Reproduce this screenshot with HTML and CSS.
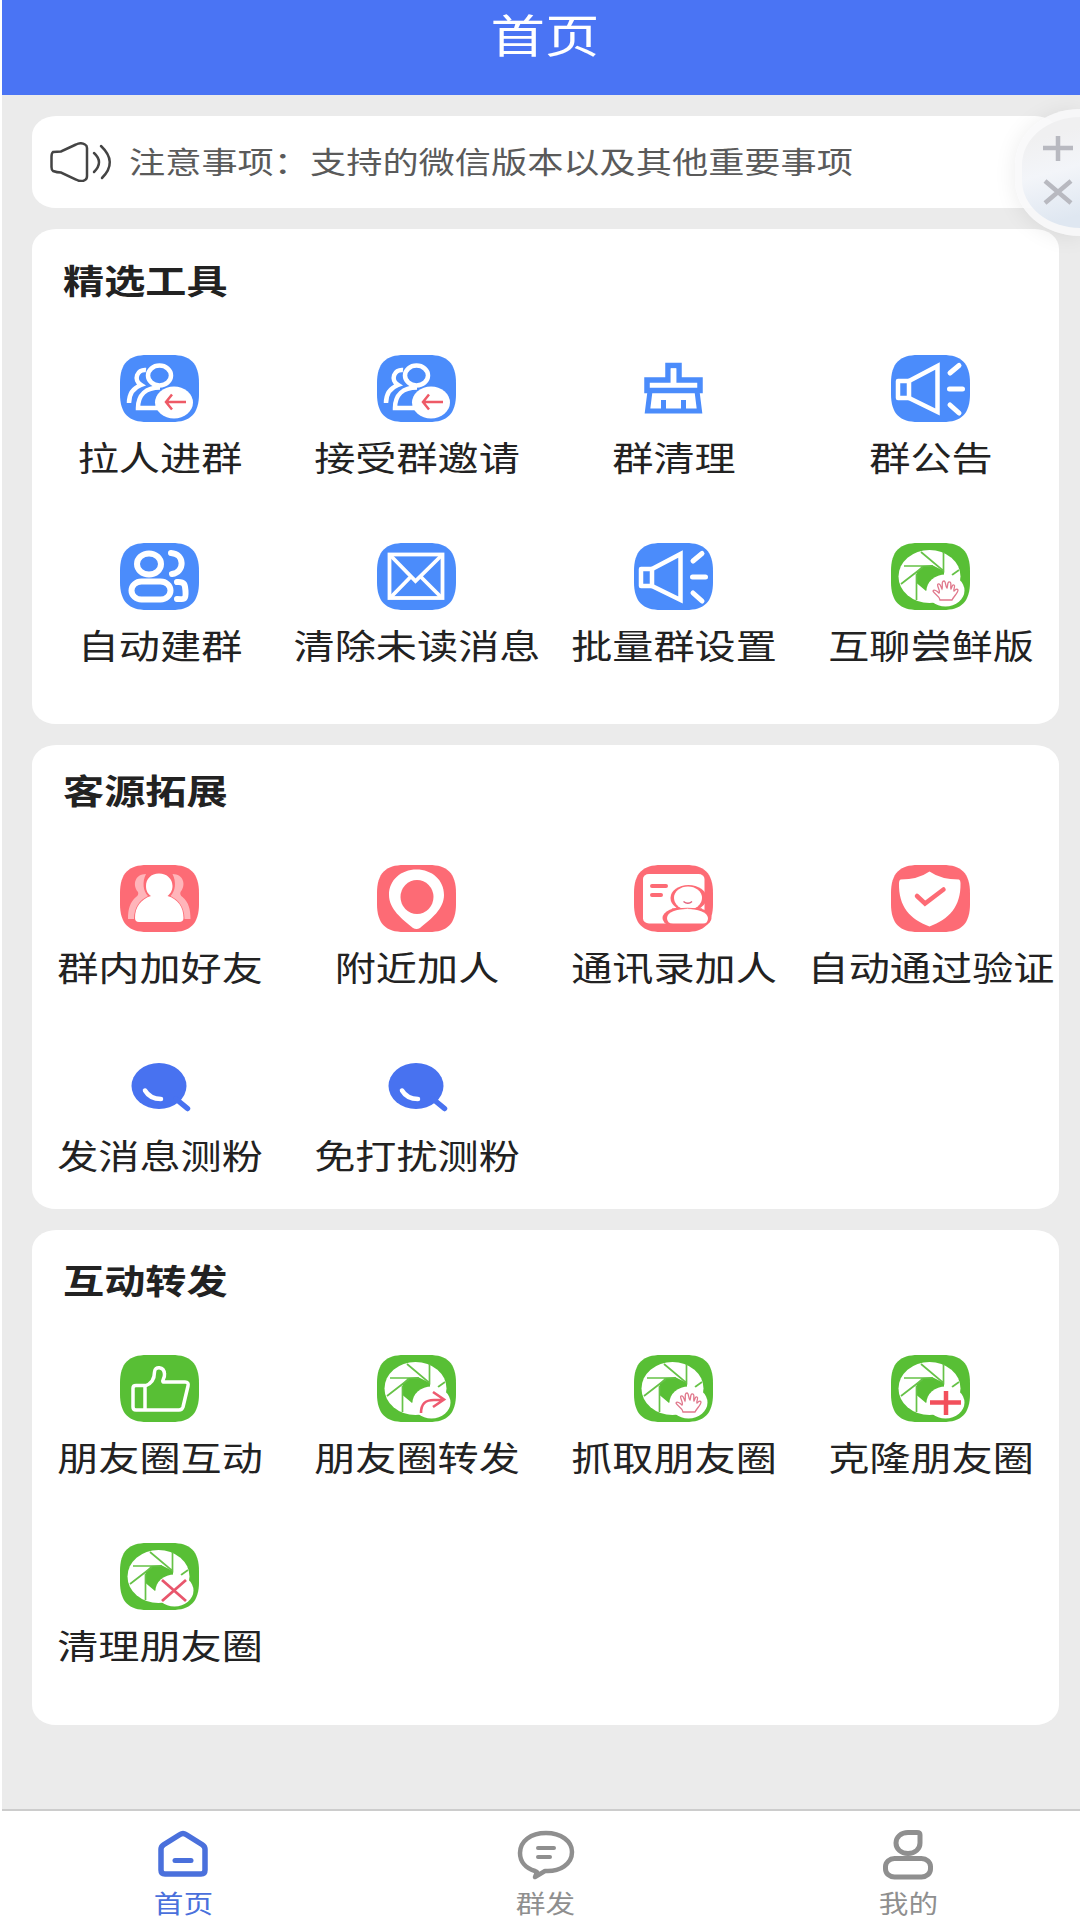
FILE: index.html
```html
<!DOCTYPE html>
<html lang="zh-CN">
<head>
  <meta charset="UTF-8">
  <meta name="viewport" content="width=device-width, initial-scale=1.0">
  <title>首页</title>
  <link rel="stylesheet" href="styles.css">
</head>
<body>
  <svg class="sprite">
    <symbol id="tile" viewBox="0 0 79 67">
      <path d="M0 28C0 8 9 0 27 0H52C70 0 79 8 79 28V39C79 59 70 67 52 67H27C9 67 0 59 0 39Z"/>
    </symbol>

    <!-- 蓝色 -->
    <symbol id="invite" viewBox="0 0 79 67">
      <use href="#tile" fill="#4b8cfb"/>
      <g fill="none" stroke="#fff" stroke-width="4.500">
        <ellipse cx="39.5" cy="20.5" rx="11.5" ry="10"/>
        <path d="M46 53H18C18 40 26 32.5 40 32.5"/>
        <path d="M26 15C17 14 13 25 21 30C13 33 9 39 9 48"/>
      </g>
      <ellipse cx="54" cy="47.5" rx="19" ry="16" fill="#fff"/>
      <path d="M66 47H46M52 39.5L46 47L52 54.5" fill="none" stroke="#ee5a66" stroke-width="2.5"/>
    </symbol>
    <symbol id="broom" viewBox="0 0 79 67">
      <g fill="none" stroke="#4b8cfb" stroke-width="5.500">
        <path d="M34 25V10.500H45V25H66V35.500H13V25Z"/>
        <path d="M16 36L13.500 56H65.500L63 36M29.500 45V56M49.500 45V56" stroke-width="5"/>
        <path d="M39.500 13.500V30" stroke="#fff" stroke-width="5.500"/>
      </g>
    </symbol>
    <symbol id="horn" viewBox="0 0 79 67">
      <use href="#tile" fill="#4b8cfb"/>
      <g fill="none" stroke="#fff" stroke-width="4.500">
        <path d="M18 26H7V43H18Z" stroke-linejoin="round"/>
        <path d="M18 26L46.500 11V57L18 43"/>
        <path d="M59 18L68 10.500M58.500 34H71.500M59 50L68 58" stroke-width="5" stroke-linecap="round"/>
      </g>
    </symbol>
    <symbol id="group" viewBox="0 0 79 67">
      <use href="#tile" fill="#4b8cfb"/>
      <g fill="none" stroke="#fff" stroke-width="6" stroke-linecap="round">
        <ellipse cx="29" cy="21" rx="12" ry="10.500"/>
        <rect x="11.500" y="38.500" width="39" height="18" rx="10" ry="9"/>
        <path d="M51 10C65 11 65 29 52 31"/>
        <path d="M57 39C65 38.500 65 42 65.500 48C66 56 65 56.500 57 56"/>
      </g>
    </symbol>
    <symbol id="mail" viewBox="0 0 79 67">
      <use href="#tile" fill="#4b8cfb"/>
      <g fill="none" stroke="#fff" stroke-width="3.800">
        <rect x="12.500" y="11.500" width="53" height="43.500"/>
        <path d="M13 12L38.500 38L65 12M13 55L33.500 34M65 55L44 34"/>
      </g>
    </symbol>

    <!-- 红色 -->
    <symbol id="friends" viewBox="0 0 79 67">
      <use href="#tile" fill="#fd6b75"/>
      <path id="shade" d="M26 9C15 9 12 20 18 27Q19 30 16 32C10 37 8 44 8 54H14C14 42 20 35 28 31C23 26 22 17 26 9Z" fill="#ffb5ba"/>
      <use href="#shade" transform="translate(78.500 0) scale(-1 1)"/>
      <path d="M39 8.500C47 8.500 52.500 14 52.500 21C52.500 26 50 29 47.500 31C58 34 63.500 42 63.500 53Q63.500 57 59 57H19Q15 57 15 53C15 42 21 34 31 31C28 29 26 26 26 21C26 14 31 8.500 39 8.500Z" fill="#fff"/>
    </symbol>
    <symbol id="pin" viewBox="0 0 79 67">
      <use href="#tile" fill="#fd6b75"/>
      <path d="M39.500 4.500C55 4.500 67 15 67 30C67 44 54 54 43 63Q39.500 65 36 63C25 54 12 44 12 30C12 15 24 4.500 39.500 4.500Z" fill="#fff"/>
      <ellipse cx="40" cy="32" rx="16.500" ry="17" fill="#fd6b75"/>
    </symbol>
    <symbol id="contact" viewBox="0 0 79 67">
      <use href="#tile" fill="#fd6b75"/>
      <rect x="9" y="9" width="61.500" height="49.500" rx="6" ry="5" fill="#fff"/>
      <path d="M18 21H32M18 30H27" stroke="#fd6b75" stroke-width="4" stroke-linecap="round"/>
      <ellipse cx="54.500" cy="33" rx="18" ry="13" fill="#fd6b75"/>
      <ellipse cx="53" cy="53" rx="24.500" ry="11.500" fill="#fd6b75"/>
      <ellipse cx="54" cy="33" rx="14" ry="11.500" fill="#fff"/>
      <path d="M33 53C33 41 73 41 74 53Q74 58.500 69 58.500H39Q33 58.500 33 53Z" fill="#fff"/>
      <path d="M49.500 36.500Q54 40 58 36.500" fill="none" stroke="#e0607c" stroke-width="1.500"/>
      <path d="M38 44Q54 42.500 68 44" fill="none" stroke="#fd6b75" stroke-width="1"/>
    </symbol>
    <symbol id="shield" viewBox="0 0 79 67">
      <use href="#tile" fill="#fd6b75"/>
      <path d="M38.500 6.500Q50 14.500 68 14.500Q69.500 15 69.500 18C70 42 58 54 38.500 61.500C19 54 7.500 42 8 18Q8 15 9.500 14.500Q27 14.500 38.500 6.500Z" fill="#fff"/>
      <path d="M26 31L34 38.500L52.500 24.500" fill="none" stroke="#fd6b75" stroke-width="4.500" stroke-linecap="round"/>
    </symbol>
    <symbol id="search" viewBox="0 0 79 67">
      <ellipse cx="39" cy="33" rx="27.500" ry="23" fill="#4872f0"/>
      <path d="M56 46L67.500 55.500" stroke="#4872f0" stroke-width="5.500" stroke-linecap="round"/>
      <path d="M25 37.500Q30 46 41 46" fill="none" stroke="#fff" stroke-width="4.500" stroke-linecap="round"/>
    </symbol>

    <!-- 绿色 -->
    <symbol id="thumb" viewBox="0 0 79 67">
      <use href="#tile" fill="#58bf35"/>
      <path d="M25 31C31 29 34.500 25 34.500 17C34.500 11 44 11 44.500 19C45 24 41.500 25 43 27H65Q69 27 68 31L63 52Q62 55 59 55H16Q13 55 13 52V33Q13 30.500 16 30.500H25V55" fill="none" stroke="#fff" stroke-width="3.500" stroke-linejoin="round"/>
    </symbol>
    <symbol id="lens" viewBox="0 0 79 67">
      <use href="#tile" fill="#58bf35"/>
      <ellipse cx="38.500" cy="33.500" rx="31" ry="26.500" fill="#fff"/>
      <path d="M31 23L41 22L53 28V34L35 48L25.500 40V29Z" fill="#58bf35"/>
      <path d="M30 9L52.500 28V9M13 23H42M10 41L32 24M25.500 31V57M61 32L68 27" fill="none" stroke="#66c247" stroke-width="1.700"/>
      <ellipse cx="54.500" cy="47.500" rx="19" ry="16" fill="#fff"/>
    </symbol>
    <symbol id="catch" viewBox="0 0 79 67">
      <use href="#lens"/>
      <path d="M49 57C48 52 43 51 42 48C43 46 46 48 48 50C50 48 45 42 47 41C49 40 50 44 51 46C52 44 50 38 53 38C55 38 54 43 56 45C57 43 56 38 59 39C61 40 59 44 60 46C61 45 61 41 63 42C65 43 62 46 63 48C64 47 66 45 67 47C67 50 63 53 61 57Z" fill="none" stroke="#e0788c" stroke-width="1.300"/>
    </symbol>
    <symbol id="share" viewBox="0 0 79 67">
      <use href="#lens"/>
      <path d="M44 58C44 48 49 45 57 45H66M56 37L67 44.500L56 52" fill="none" stroke="#ee5a70" stroke-width="2.600"/>
    </symbol>
    <symbol id="clone" viewBox="0 0 79 67">
      <use href="#lens"/>
      <path d="M39 47.500H70M55 36V60" stroke="#f2505c" stroke-width="4.500"/>
    </symbol>
    <symbol id="clear" viewBox="0 0 79 67">
      <use href="#lens"/>
      <path d="M42 37L66 58M66 37L42 58" stroke="#e8566c" stroke-width="2.800"/>
    </symbol>
  </svg>

  <div class="app">
    <header class="header"><span class="wide">首页</span></header>

    <main class="content">
      <div class="card notice">
        <svg class="speaker" viewBox="0 0 62 40" fill="none" stroke="#444" stroke-width="2.500" stroke-linecap="round">
          <path d="M3 10Q7 9.500 11 9.500L26 2.500Q31 0 35 2.500Q37 3.500 37 6V34Q37 37 35 38Q31 40.500 26 37.500L11 30.500Q7 30.500 3 29Q1.500 28 1.500 25V15Q1.500 11 3 10Z"/>
          <path d="M44 11Q54 20 44 30M51 4Q68 20 52 36"/>
        </svg>
        <span class="wide notice-text">注意事项：支持的微信版本以及其他重要事项</span>
      </div>

      <section class="card tools">
        <h2><span class="wide">精选工具</span></h2>
        <div class="grid">
          <div class="item"><svg><use href="#invite"/></svg><span class="wide">拉人进群</span></div>
          <div class="item"><svg><use href="#invite"/></svg><span class="wide">接受群邀请</span></div>
          <div class="item"><svg><use href="#broom"/></svg><span class="wide">群清理</span></div>
          <div class="item"><svg><use href="#horn"/></svg><span class="wide">群公告</span></div>
          <div class="item"><svg><use href="#group"/></svg><span class="wide">自动建群</span></div>
          <div class="item"><svg><use href="#mail"/></svg><span class="wide">清除未读消息</span></div>
          <div class="item"><svg><use href="#horn"/></svg><span class="wide">批量群设置</span></div>
          <div class="item"><svg><use href="#catch"/></svg><span class="wide">互聊尝鲜版</span></div>
        </div>
      </section>

      <section class="card expand">
        <h2><span class="wide">客源拓展</span></h2>
        <div class="grid">
          <div class="item"><svg><use href="#friends"/></svg><span class="wide">群内加好友</span></div>
          <div class="item"><svg><use href="#pin"/></svg><span class="wide">附近加人</span></div>
          <div class="item"><svg><use href="#contact"/></svg><span class="wide">通讯录加人</span></div>
          <div class="item"><svg><use href="#shield"/></svg><span class="wide">自动通过验证</span></div>
          <div class="item"><svg><use href="#search"/></svg><span class="wide">发消息测粉</span></div>
          <div class="item"><svg><use href="#search"/></svg><span class="wide">免打扰测粉</span></div>
        </div>
      </section>

      <section class="card forward">
        <h2><span class="wide">互动转发</span></h2>
        <div class="grid">
          <div class="item"><svg><use href="#thumb"/></svg><span class="wide">朋友圈互动</span></div>
          <div class="item"><svg><use href="#share"/></svg><span class="wide">朋友圈转发</span></div>
          <div class="item"><svg><use href="#catch"/></svg><span class="wide">抓取朋友圈</span></div>
          <div class="item"><svg><use href="#clone"/></svg><span class="wide">克隆朋友圈</span></div>
          <div class="item"><svg><use href="#clear"/></svg><span class="wide">清理朋友圈</span></div>
        </div>
      </section>
    </main>

    <nav class="tabbar">
      <div class="tab active">
        <svg viewBox="0 0 60 52" fill="none" stroke="currentColor" stroke-width="5.500" stroke-linejoin="round" stroke-linecap="round">
          <path d="M27 5.500Q30 3.500 33 5.500L49 15.500Q52 17.500 52 20V41Q52 45 48 45H12Q8 45 8 41V20Q8 17.500 11 15.500Z"/>
          <path d="M22 31.500H38" stroke-width="5"/>
        </svg>
        <span class="wide">首页</span>
      </div>
      <div class="tab">
        <svg viewBox="0 0 60 52" fill="none" stroke="currentColor" stroke-width="4.500" stroke-linejoin="round">
          <path d="M19 42C9 39 4 32 4 24C4 12 15 4 30 4C45 4 56 12 56 23C56 35 44 43 29 42L19 48L21 43Z"/>
          <path d="M22 19H38M22 28H34" stroke-width="4" stroke-linecap="round"/>
        </svg>
        <span class="wide">群发</span>
      </div>
      <div class="tab">
        <svg viewBox="0 0 60 52" fill="none" stroke="currentColor" stroke-width="5" stroke-linejoin="round">
          <path d="M30 3.500H39Q42 3.500 42 6V14C42 20 37 24.500 30 24.500C23 24.500 18 20 18 14C18 8 23 3.500 30 3.500Z"/>
          <rect x="7.500" y="29.500" width="45" height="18.500" rx="9" ry="8"/>
        </svg>
        <span class="wide">我的</span>
      </div>
    </nav>
  </div>

  <!-- 悬浮球 -->
  <div class="float-ball">
    <div class="float-inner">
      <svg viewBox="0 0 32 74" stroke="#b8b9c0" stroke-width="4.500">
        <path d="M1 14H31M16 2V27M3 47L29 69M29 47L3 69"/>
      </svg>
    </div>
  </div>
</body>
</html>
```

FILE: styles.css
```css
* {
  box-sizing: border-box;
}
body {
  margin: 0;
  height: 1920px;
  overflow: hidden;
  position: relative;
  background-color: #fff;
  font-family: "Noto Sans CJK SC", sans-serif;
  color: #222;
}
.sprite {
  display: none;
}
.wide {
  display: inline-block;
  white-space: nowrap;
  transform: scaleX(1.21);
}
.app {
  height: 1920px;
  margin-left: 2px;
  display: flex;
  flex-direction: column;
  background-color: #ebebeb;
}
.header {
  height: 95px;
  padding-top: 1px;
  padding-left: 9px;
  background-color: #4a74f4;
  color: #fff;
  font-size: 45px;
  line-height: 66px;
  text-align: center;
}
.content {
  flex: 1;
  display: flex;
  flex-direction: column;
  gap: 21px;
  padding: 21px 21px 0 30px;
}
.card {
  background-color: #fff;
  border-radius: 24px / 20px;
}
.notice {
  height: 92px;
  display: flex;
  align-items: center;
  gap: 17px;
  padding-left: 18px;
}
.speaker {
  width: 62px;
  height: 40px;
}
.notice-text {
  font-size: 29.5px;
  line-height: 44px;
  padding-bottom: 4px;
  color: #5a5a5a;
  transform: scaleX(1.227);
  transform-origin: left center;
}
.tools {
  height: 495px;
  padding-top: 27px;
}
.expand {
  height: 464px;
  padding-top: 21px;
}
.forward {
  height: 495px;
  padding-top: 26px;
}
h2 {
  margin: 0;
  padding-left: 31px;
  height: 50px;
  font-size: 34px;
  line-height: 48px;
  font-weight: 700;
}
h2 .wide {
  transform-origin: left center;
}
.grid {
  display: grid;
  grid-template-columns: repeat(4, 1fr);
  grid-auto-rows: 187.5px;
  padding-top: 49px;
}
.item {
  display: flex;
  flex-direction: column;
  align-items: center;
}
.item svg {
  width: 79px;
  height: 67px;
  margin-right: 1px;
}
.item span {
  margin-top: 11px;
  font-size: 34px;
  line-height: 48px;
}
.tabbar {
  height: 111px;
  display: flex;
  gap: 302.5px;
  padding-left: 151px;
  border-top: 2px solid #ccc;
  background-color: #fff;
}
.tab {
  width: 60px;
  display: flex;
  flex-direction: column;
  align-items: center;
  padding-top: 18px;
  color: #8f8f8f;
  font-size: 24.5px;
  line-height: 34px;
}
.tab svg {
  width: 60px;
  height: 52px;
  margin-bottom: 5px;
}
.tab.active {
  color: #4a70dc;
}
.float-ball {
  position: absolute;
  right: 0;
  top: 109px;
  width: 65px;
  height: 127px;
  padding: 8px 0 8px 7px;
  border-radius: 75px 0 0 75px / 64px 0 0 64px;
  background-color: rgba(248, 248, 249, 0.9);
  box-shadow: 0 2px 22px rgba(0, 0, 0, 0.08);
}
.float-inner {
  height: 100%;
  padding: 17px 0 0 20px;
  border-radius: 68px 0 0 68px / 56px 0 0 56px;
  background: linear-gradient(165deg, #f0f0f1 20%, #f3f5f9 50%, #dfe7f1 90%);
}
.float-inner svg {
  display: block;
  width: 32px;
  height: 74px;
}
```
